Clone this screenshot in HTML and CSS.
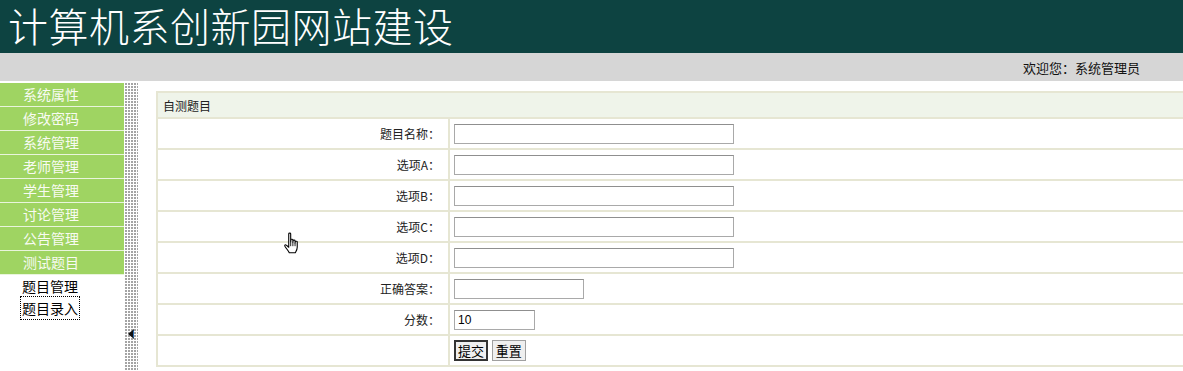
FILE: index.html
```html
<!DOCTYPE html>
<html lang="zh-CN">
<head>
  <meta charset="UTF-8">
  <meta name="viewport" content="width=device-width, initial-scale=1.0">
  <title>计算机系创新园网站建设</title>
  <link rel="stylesheet" href="styles.css">
</head>
<body>

  <!-- Banner -->
  <div class="header">
    <h1 class="title">计算机系创新园网站建设</h1>
  </div>
  <div class="topbar">
    <span class="welcome">欢迎您：系统管理员</span>
  </div>

  <div class="layout">
    <!-- Left menu -->
    <div class="menu">
      <ul class="menu-groups">
        <li>系统属性</li>
        <li>修改密码</li>
        <li>系统管理</li>
        <li>老师管理</li>
        <li>学生管理</li>
        <li>讨论管理</li>
        <li>公告管理</li>
        <li>测试题目</li>
      </ul>
      <ul class="menu-links">
        <li><a href="#">题目管理</a></li>
        <li><a href="#" class="focused">题目录入</a></li>
      </ul>
    </div>

    <div class="splitter">
      <svg class="splitter-arrow" width="7" height="10" viewBox="0 0 7 10">
        <path d="M6 0 L0 5 L6 10 Z" fill="#111"/>
        <path d="M5 2 L6 1 L6 9 L5 8 Z" fill="#2a6fb8"/>
      </svg>
    </div>

    <!-- Form -->
    <div class="main">
      <table class="form-table">
        <tr>
          <td colspan="2" class="caption">自测题目</td>
        </tr>
        <tr>
          <td class="label">题目名称：</td>
          <td class="field"><input type="text" class="input-long"></td>
        </tr>
        <tr>
          <td class="label">选项A：</td>
          <td class="field"><input type="text" class="input-long"></td>
        </tr>
        <tr>
          <td class="label">选项B：</td>
          <td class="field"><input type="text" class="input-long"></td>
        </tr>
        <tr>
          <td class="label">选项C：</td>
          <td class="field"><input type="text" class="input-long"></td>
        </tr>
        <tr>
          <td class="label">选项D：</td>
          <td class="field"><input type="text" class="input-long"></td>
        </tr>
        <tr>
          <td class="label">正确答案：</td>
          <td class="field"><input type="text" class="input-mid"></td>
        </tr>
        <tr>
          <td class="label">分数：</td>
          <td class="field"><input type="text" class="input-short" value="10"></td>
        </tr>
        <tr>
          <td class="label"></td>
          <td class="field">
            <button class="btn btn-default">提交</button>
            <button class="btn">重置</button>
          </td>
        </tr>
      </table>
    </div>
  </div>

  <!-- mouse pointer from the screenshot -->
  <svg class="cursor" width="18" height="24" viewBox="0 0 16 22">
    <path d="M5 1.5 C5 0.8 6.8 0.8 6.8 1.5 L6.8 9 L7 7.2 C7 6.5 8.8 6.5 8.8 7.2 L8.8 9.5 L9 8 C9 7.3 10.8 7.3 10.8 8 L10.8 10 L11 9 C11 8.3 12.8 8.3 12.8 9 L12.8 14 C12.8 16.5 11.5 18 11 19 L5.5 19 C5 17.5 3 15.5 1.5 13 C1 12 2 11.2 2.8 12 L5 14 Z" fill="#fff" stroke="#000" stroke-width="1" stroke-linejoin="round"/>
    <path d="M6.8 9 L6.8 13 M8.8 9.5 L8.8 13 M10.8 10 L10.8 13" stroke="#000" stroke-width="0.8"/>
  </svg>

</body>
</html>
```

FILE: styles.css
```css
/* Global */
body {
  margin: 0;
  font-family: "Noto Sans CJK SC", "Liberation Sans", sans-serif;
  font-size: 12px;
  color: #222;
  background: #fff;
}

ul {
  list-style: none;
  margin: 0;
  padding: 0;
}

/* Banner */
.header {
  height: 53px;
  background: #0d4341;
  display: flex;
  align-items: flex-start;
  padding-left: 8px;
}

.title {
  margin: 0;
  font-size: 40px;
  font-weight: 300;
  color: #fff;
  letter-spacing: 0.5px;
  line-height: 50px;
  white-space: nowrap;
}

.topbar {
  height: 28px;
  background: #d6d6d6;
  border-bottom: 1px solid #fff;
  display: flex;
  align-items: center;
  justify-content: flex-end;
  padding-right: 43px;
}

.welcome {
  font-size: 13px;
  color: #111;
}

/* Body */
.layout {
  display: flex;
  height: 289px;
}

.menu {
  width: 124px;
  padding-top: 1px;
}

.menu-groups li {
  height: 23px;
  line-height: 22px;
  background: #9fd462;
  border-bottom: 1px solid #e9f5dc;
  color: #f8fbf2;
  font-size: 14px;
  padding-left: 23px;
}

.menu-links li {
  height: 22px;
  line-height: 22px;
  padding-left: 22px;
  font-size: 14px;
}

.menu-links a {
  color: #000;
  text-decoration: none;
}

.menu-links a.focused {
  outline: 1px dotted #000;
  outline-offset: 1px;
}

.splitter {
  width: 14px;
  background-color: #fff;
  background-image: linear-gradient(to right, #fff 1px, transparent 1px),
                    linear-gradient(to bottom, #fff 1px, #a4a4a4 1px);
  background-size: 3px 3px;
  display: flex;
  align-items: flex-start;
  padding-top: 247px;
  box-sizing: border-box;
}

.splitter-arrow {
  margin-left: 4px;
}

.main {
  flex: 1;
  padding: 9px 0 0 18px;
  overflow: hidden;
}

/* Form table */
.form-table {
  width: calc(100% + 4px);
  border-collapse: collapse;
}

.form-table td {
  border: 2px solid #e6e6d3;
  padding: 0;
  height: 29px;
}

.form-table .caption {
  height: 24px;
  background: #eff4ea;
  padding-left: 5px;
  color: #222;
}

.form-table .label {
  width: 282px;
  text-align: right;
  padding-right: 8px;
  color: #222;
}

.form-table .field {
  padding-left: 4px;
}

input[type="text"] {
  box-sizing: border-box;
  height: 20px;
  border: 1px solid #a9a9a9;
  border-top-color: #8f8f8f;
  padding: 1px 3px;
  font-family: "Liberation Sans", sans-serif;
  font-size: 12px;
  color: #000;
  vertical-align: middle;
}

.input-long {
  width: 280px;
}

.input-mid {
  width: 130px;
}

.input-short {
  width: 81px;
}

.btn {
  box-sizing: border-box;
  height: 21px;
  padding: 0 3px;
  margin-right: 1px;
  font-family: "Noto Sans CJK SC", sans-serif;
  font-size: 13px;
  line-height: 17px;
  color: #000;
  background: #efefef;
  border: 1px solid #a0a0a0;
  vertical-align: middle;
}

.btn-default {
  border: 2px solid #333;
  padding: 0 2px;
}

.cursor {
  position: absolute;
  left: 283px;
  top: 232px;
}
```
